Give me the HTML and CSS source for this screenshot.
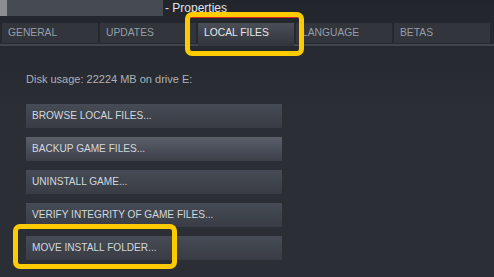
FILE: index.html
```html
<!DOCTYPE html>
<html>
<head>
<meta charset="utf-8">
<link rel="stylesheet" href="styles.css">
</head>
<body>
<div class="window">
  <div class="titlebar">
    <div class="title-blur"><span class="blur-strip"></span></div>
    <span class="title-text">- Properties</span>
  </div>
  <div class="tabs">
    <div class="tab">GENERAL</div>
    <div class="tab">UPDATES</div>
    <div class="tab active">LOCAL FILES</div>
    <div class="tab">LANGUAGE</div>
    <div class="tab">BETAS</div>
  </div>
  <div class="content">
    <div class="disk">Disk usage: 22224 MB on drive E:</div>
    <div class="buttons">
      <div class="btn">BROWSE LOCAL FILES...</div>
      <div class="btn hover">BACKUP GAME FILES...</div>
      <div class="btn">UNINSTALL GAME...</div>
      <div class="btn">VERIFY INTEGRITY OF GAME FILES...</div>
      <div class="btn">MOVE INSTALL FOLDER...</div>
    </div>
  </div>
  <div class="redline"></div>
  <div class="mark mark-tab"></div>
  <div class="mark mark-move"></div>
</div>
</body>
</html>
```
FILE: styles.css
```css
html, body {
  margin: 0;
  padding: 0;
}
body {
  width: 494px;
  height: 277px;
  overflow: hidden;
  background: #2a2d33;
  font-family: "Liberation Sans", Arial, sans-serif;
}
.window {
  position: relative;
  width: 494px;
  height: 277px;
  background: linear-gradient(#22262c 0, #262a30 45px, #2b2e34 120px, #2b2e35 277px);
}
.titlebar {
  display: flex;
  align-items: flex-start;
  height: 23px;
}
.title-blur {
  width: 163px;
  height: 16px;
  background: #464a51;
  display: flex;
}
.blur-strip {
  width: 7px;
  height: 16px;
  background: #8b8d92;
}
.title-text {
  margin-left: 2px;
  font-size: 12px;
  color: #dfe3e7;
  line-height: 16px;
}
.tabs {
  display: flex;
  gap: 2px;
  padding-left: 2px;
  height: 21px;
  border-bottom: 2px solid #42454b;
  box-sizing: content-box;
}
.tab {
  width: 96px;
  height: 20px;
  background: #32353b;
  color: #959ea8;
  font-size: 10.3px;
  line-height: 20px;
  padding-left: 6px;
  box-sizing: border-box;
}
.tab.active {
  height: 23px;
  background: linear-gradient(#4a4e56, #31343b);
  color: #e3e7eb;
  position: relative;
  z-index: 1;
}
.content {
  padding-left: 26px;
  padding-top: 26px;
}
.disk {
  font-size: 11px;
  color: #adb1b6;
  line-height: 14px;
  height: 14px;
}
.buttons {
  margin-top: 18px;
  display: flex;
  flex-direction: column;
  gap: 9px;
}
.btn {
  width: 256px;
  height: 24px;
  background: linear-gradient(#464b55, #393c44);
  color: #d3d8dd;
  font-size: 10.1px;
  line-height: 24px;
  padding-left: 6px;
  box-sizing: border-box;
}
.btn.hover {
  background: linear-gradient(#5a5f6b, #3c3f48);
}
.redline {
  position: absolute;
  left: 191px;
  top: 17px;
  width: 107px;
  height: 1px;
  background: #d2222a;
}
.mark {
  position: absolute;
  border: 5px solid #fecb00;
  border-radius: 7px;
  box-sizing: border-box;
}
.mark-tab {
  left: 185px;
  top: 12px;
  width: 119px;
  height: 44px;
}
.mark-move {
  left: 13px;
  top: 224px;
  width: 164px;
  height: 45px;
}
```
